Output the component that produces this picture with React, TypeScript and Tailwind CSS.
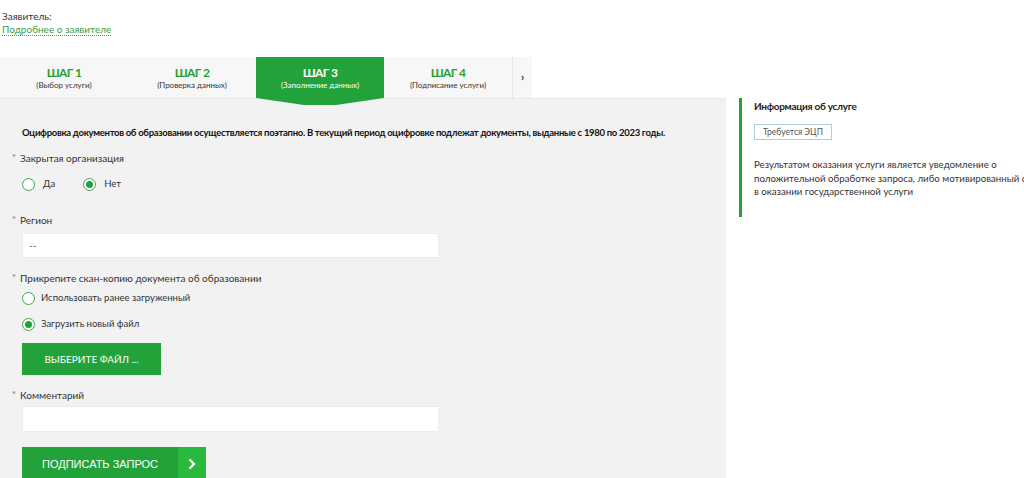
import React from "react";

const Radio = ({ checked }: { checked?: boolean }) => (
  <span className="w-[13px] h-[13px] rounded-full border border-[#3aa64a] bg-white flex items-center justify-center shrink-0">
    {checked && <span className="w-[7px] h-[7px] rounded-full bg-[#22a33a]" />}
  </span>
);

const Label = ({ children }: { children: React.ReactNode }) => (
  <div className="flex items-start text-[10px] text-[#333] leading-[12px]">
    <span className="w-[8px] ml-[12px] text-[#2ca02c] text-[9px]">*</span>
    <span>{children}</span>
  </div>
);

const Step = ({ n, sub, active }: { n: number; sub: string; active?: boolean }) => (
  <div className={`relative w-[128px] h-[41px] flex flex-col items-center justify-center ${active ? "bg-[#22a23a] text-white" : "text-[#2ca02c]"}`}>
    <div className="text-[12px] font-bold leading-[14px] tracking-[-0.6px]">ШАГ {n}</div>
    <div className={`text-[8px] leading-[10px] ${active ? "text-white" : "text-[#333]"}`}>{sub}</div>
    {active && (
      <svg className="absolute left-0 top-[41px]" width="128" height="8" viewBox="0 0 128 8">
        <polygon points="0,0 128,0 80,7 48,7" fill="#22a23a" />
      </svg>
    )}
  </div>
);

export default function App() {
  return (
    <div className="w-[1024px] h-[478px] overflow-hidden bg-white" style={{ fontFamily: 'Lato, "Noto Sans", sans-serif' }}>
      <div className="pl-[2px] pt-[10px] h-[57px] leading-[13px]">
        <div className="text-[10px] text-[#333] leading-[13px]">Заявитель:</div>
        <div className="text-[10px] text-[#3aa04a] leading-[12px] w-fit border-b border-dotted border-[#3aa04a]">Подробнее о заявителе</div>
      </div>
      <div className="flex">
        <div className="w-[726px] shrink-0">
          <div className="flex w-[532px] bg-[#f7f7f7] relative z-10">
            <Step n={1} sub="(Выбор услуги)" />
            <Step n={2} sub="(Проверка данных)" />
            <Step n={3} sub="(Заполнение данных)" active />
            <Step n={4} sub="(Подписание услуги)" />
            <div className="w-[20px] h-[41px] border-l border-[#e6e6e6] flex items-center justify-center text-[#333] text-[11px] font-bold">›</div>
          </div>
          <div className="bg-[#f2f2f2] border-t border-[#e8e8e8] h-[380px] pt-[27px]">
            <div className="pl-[22px] text-[9.5px] font-bold text-[#111] leading-[13px] whitespace-nowrap tracking-[-0.3px]">
              Оцифровка документов об образовании осуществляется поэтапно. В текущий период оцифровке подлежат документы, выданные с 1980 по 2023 годы.
            </div>
            <div className="mt-[13px]"><Label>Закрытая организация</Label></div>
            <div className="flex items-center pl-[22px] mt-[14px] text-[9.5px] text-[#333] h-[13px]">
              <Radio />
              <span className="ml-[8px]">Да</span>
              <span className="ml-[28px]"><Radio checked /></span>
              <span className="ml-[8px]">Нет</span>
            </div>
            <div className="mt-[23px]"><Label>Регион</Label></div>
            <div className="ml-[22px] mt-[7px] w-[417px] h-[25px] bg-white border border-[#ececec] flex items-center pl-[6px] text-[10px] text-[#555]">--</div>
            <div className="mt-[14px]"><Label>Прикрепите скан-копию документа об образовании</Label></div>
            <div className="flex items-center pl-[22px] mt-[8px] text-[9.5px] text-[#333] h-[13px]">
              <Radio />
              <span className="ml-[6px]">Использовать ранее загруженный</span>
            </div>
            <div className="flex items-center pl-[22px] mt-[13px] text-[9.5px] text-[#333] h-[13px]">
              <Radio checked />
              <span className="ml-[6px]">Загрузить новый файл</span>
            </div>
            <div className="ml-[22px] mt-[12px] w-[139px] h-[32px] bg-[#22a33a] text-white text-[10px] flex items-center justify-center">ВЫБЕРИТЕ ФАЙЛ ...</div>
            <div className="mt-[14px]"><Label>Комментарий</Label></div>
            <div className="ml-[22px] mt-[5px] w-[417px] h-[26px] bg-white border border-[#ececec]" />
            <div className="ml-[22px] mt-[15px] w-[184px] h-[34px] flex">
              <div className="w-[156px] bg-[#22a33a] text-white text-[11px] flex items-center justify-center" style={{ fontFamily: '"Liberation Sans", Arial, sans-serif' }}>ПОДПИСАТЬ ЗАПРОС</div>
              <div className="w-[28px] bg-[#2ab83f] flex items-center justify-center">
                <svg width="8" height="12" viewBox="0 0 8 12"><path d="M1.5 1.5 L6 6 L1.5 10.5" fill="none" stroke="white" strokeWidth="2.2" /></svg>
              </div>
            </div>
          </div>
        </div>
        <div className="ml-[13px] mt-[41px] w-[280px]">
          <div className="border-l-[3px] border-[#22a33a] h-[119px] pl-[12px] pt-[1px]">
            <div className="text-[10px] font-bold text-[#222] leading-[14px] tracking-[-0.3px]">Информация об услуге</div>
            <div className="mt-[11px] inline-block border border-[#a9cfe0] bg-white text-[8.5px] text-[#555] px-[8px] h-[16px] leading-[14px]">Требуется ЭЦП</div>
            <div className="mt-[17px] text-[9.7px] text-[#333] leading-[13.5px] whitespace-nowrap">
              Результатом оказания услуги является уведомление о<br />
              положительной обработке запроса, либо мотивированный отка<br />
              в оказании государственной услуги
            </div>
          </div>
        </div>
      </div>
    </div>
  );
}
